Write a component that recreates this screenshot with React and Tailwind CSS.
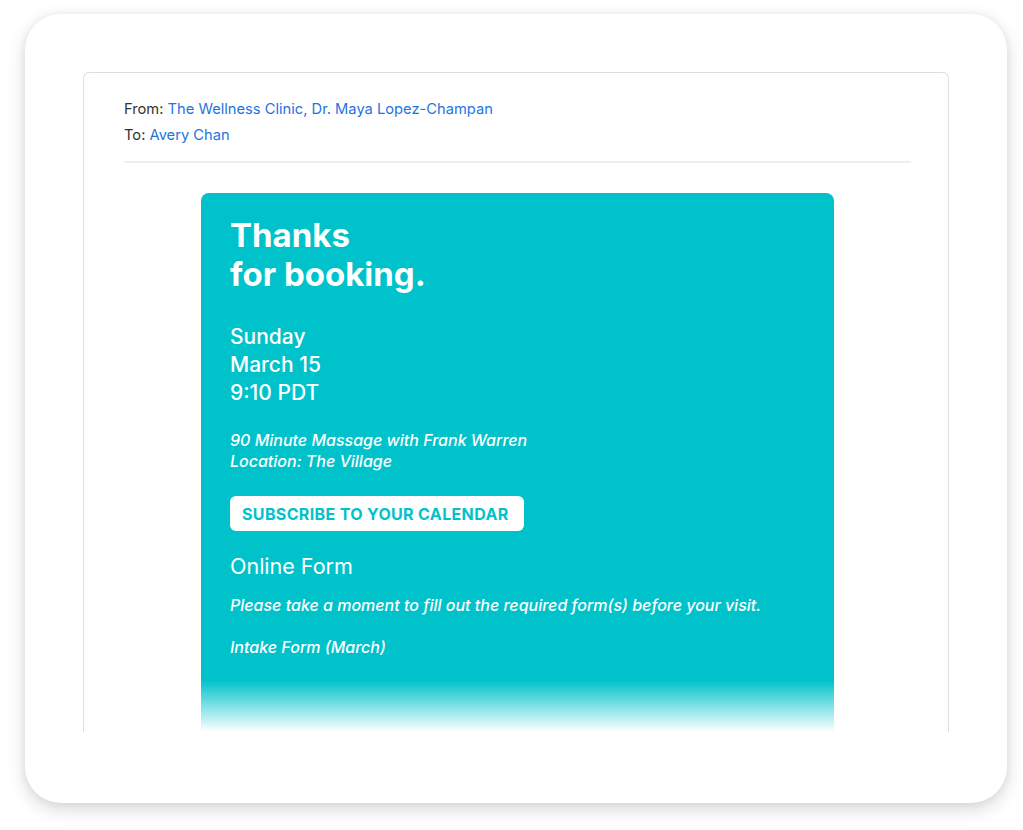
import React from "react";

export default function App() {
  const font = { fontFamily: "Inter, 'Open Sans', sans-serif" };
  return (
    <div className="w-[1023px] h-[830px] bg-white pt-[14px] pl-[25px]" style={font}>
      <div className="w-[982px] h-[789px] bg-white rounded-[36px] shadow-[0_6px_18px_rgba(0,0,0,0.16),0_0_8px_rgba(0,0,0,0.05)] p-[58px] pb-0">
        <div className="relative h-[660px] border border-b-0 border-[#dedede] rounded-t-[6px] pl-[40px] pr-[37px] pt-[23px] overflow-hidden">
          <div className="text-[14.7px] leading-[26px] text-[#333]">
            <div>
              From: <span className="text-[#1f74e0]">The Wellness Clinic, Dr. Maya Lopez-Champan</span>
            </div>
            <div>
              To: <span className="text-[#1f74e0]">Avery Chan</span>
            </div>
          </div>
          <div className="mt-[13px] h-[2px] bg-[#eeeeee]" />
          <div className="mt-[30px] mx-auto w-[633px] h-[560px] bg-[#00c2cb] rounded-t-[8px] pl-[29px] pt-[23px] text-white">
            <div className="text-[33px] leading-[39px] font-bold">
              Thanks
              <br />
              for booking.
            </div>
            <div className="mt-[29px] text-[21px] leading-[28px] font-medium">
              Sunday
              <br />
              March 15
              <br />
              9:10 PDT
            </div>
            <div className="mt-[23px] text-[16px] leading-[21px] italic font-medium">
              90 Minute Massage with Frank Warren
              <br />
              Location: The Village
            </div>
            <div className="mt-[24px] inline-flex h-[35px] items-center rounded-[6px] bg-white pl-[12px] pr-[15px] text-[16px] tracking-[0.35px] font-bold text-[#00c2cb]">
              SUBSCRIBE TO YOUR CALENDAR
            </div>
            <div className="mt-[21px] text-[21.5px] leading-[28px]">Online Form</div>
            <div className="mt-[14px] text-[16px] leading-[22px] italic font-medium">
              Please take a moment to fill out the required form(s) before your visit.
            </div>
            <div className="mt-[20px] text-[16px] leading-[22px] italic font-medium">Intake Form (March)</div>
          </div>
          <div className="absolute left-[-2px] right-[-2px] bottom-0 h-[52px] bg-gradient-to-b from-white/0 to-white" />
        </div>
      </div>
    </div>
  );
}
